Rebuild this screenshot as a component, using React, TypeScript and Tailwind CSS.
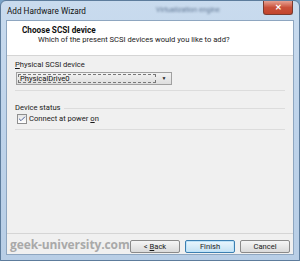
import { Check } from 'lucide-react'

const ui = { fontFamily: 'Roboto, "Liberation Sans", Arial, sans-serif' }
const mark = { fontFamily: '"Open Sans", "Noto Sans", sans-serif' }

function WinButton({ children, primary }: { children: React.ReactNode; primary?: boolean }) {
  return (
    <button
      className={
        'h-[13px] w-[50px] rounded-[2px] border text-[7.6px] leading-none text-[#1a1a1a] ' +
        (primary
          ? 'border-[#3c7fb1] bg-gradient-to-b from-[#eaf6fd] to-[#c4e2f4] shadow-[inset_0_0_0_1px_#bfe3f8]'
          : 'border-[#8a8a8a] bg-gradient-to-b from-[#f5f5f5] to-[#dadada]')
      }
    >
      {children}
    </button>
  )
}

export default function App() {
  return (
    <div className="h-[261px] w-[300px] overflow-hidden bg-[#7aa3c8]" style={ui}>
      <div className="flex h-full w-full flex-col rounded-t-[6px] border border-[#5d7c9c] bg-gradient-to-b from-[#c9dbee] via-[#bed3ea] to-[#b8cee6] px-[5px] pb-[5px]">
        {/* title bar */}
        <div className="flex h-[19px] shrink-0 items-start">
          <span className="pl-[1px] pt-[5px] text-[8.2px] leading-[10px] text-[#111]">Add Hardware Wizard</span>
          <span className="ml-[70px] pt-[4px] text-[7px] leading-[10px] text-[#5f7592] blur-[1.2px]">Virtualization engine</span>
          <div className="ml-auto mr-[1px] flex h-[14px] w-[30px] items-center justify-center rounded-b-[3px] border border-t-0 border-[#7a3a2e] bg-gradient-to-b from-[#e5a193] via-[#c9503a] to-[#c2442c] text-[8px] font-bold leading-none text-white">
            ✕
          </div>
        </div>
        {/* client area */}
        <div className="flex min-h-0 flex-1 flex-col border border-[#8ea6c0] bg-[#f0f0f0]">
          <div className="h-[35px] shrink-0 border-b border-[#d5d5d5] bg-white pl-[15px] pt-[4px]">
            <div className="text-[8.2px] font-bold leading-[10px] text-[#111]">Choose SCSI device</div>
            <div className="pl-[16px] text-[7.6px] leading-[10px] text-[#1a1a1a]">Which of the present SCSI devices would you like to add?</div>
          </div>
          <div className="flex flex-1 flex-col px-[8px] pt-[4px] text-[#1a1a1a]">
            <div className="text-[7.6px] leading-[10px]">
              <span className="underline">P</span>hysical SCSI device
            </div>
            <div className="ml-[1px] mt-[2px] flex h-[13px] w-[156px] items-center border border-[#a0a0a0] bg-gradient-to-b from-[#f2f2f2] to-[#dedede] p-[1px]">
              <div className="flex h-full w-[138px] items-center border border-dashed border-[#777] pl-[1px] text-[7.6px] leading-none text-[#111]">
                PhysicalDrive0
              </div>
              <div className="flex flex-1 justify-center pl-[2px] text-[5px] leading-none text-[#222]">▼</div>
            </div>
            <div className="mt-[5px] border-t border-[#dcdcdc]" />
            <div className="mt-[12px] flex items-center gap-[3px]">
              <span className="text-[7.6px] leading-[10px]">Device status</span>
              <div className="h-0 flex-1 border-t border-[#dcdcdc]" />
            </div>
            <div className="ml-[2px] mt-[1px] flex items-center gap-[2px]">
              <div className="flex h-[10px] w-[10px] items-center justify-center border border-[#8f8f8f] bg-gradient-to-b from-[#e6e6e6] to-[#ffffff]">
                <Check size={8} strokeWidth={3} className="text-[#4a5f97]" />
              </div>
              <span className="text-[7.6px] leading-[10px]">
                Connect at power <span className="underline">o</span>n
              </span>
            </div>
            <div className="mt-[5px] border-t border-[#dcdcdc]" />
          </div>
          <div className="flex h-[21px] shrink-0 items-start border-t border-[#d5d5d5] px-[3px] pt-[6px]">
            <span className="-mt-[3px] flex-1 text-[12px] font-bold leading-[16px] tracking-[-0.1px] text-[#a9a9a9]" style={mark}>
              geek-university.com
            </span>
            <div className="flex gap-[5px]">
              <WinButton>
                &lt; <span className="underline">B</span>ack
              </WinButton>
              <WinButton primary>Finish</WinButton>
              <WinButton>Cancel</WinButton>
            </div>
          </div>
        </div>
      </div>
    </div>
  )
}
